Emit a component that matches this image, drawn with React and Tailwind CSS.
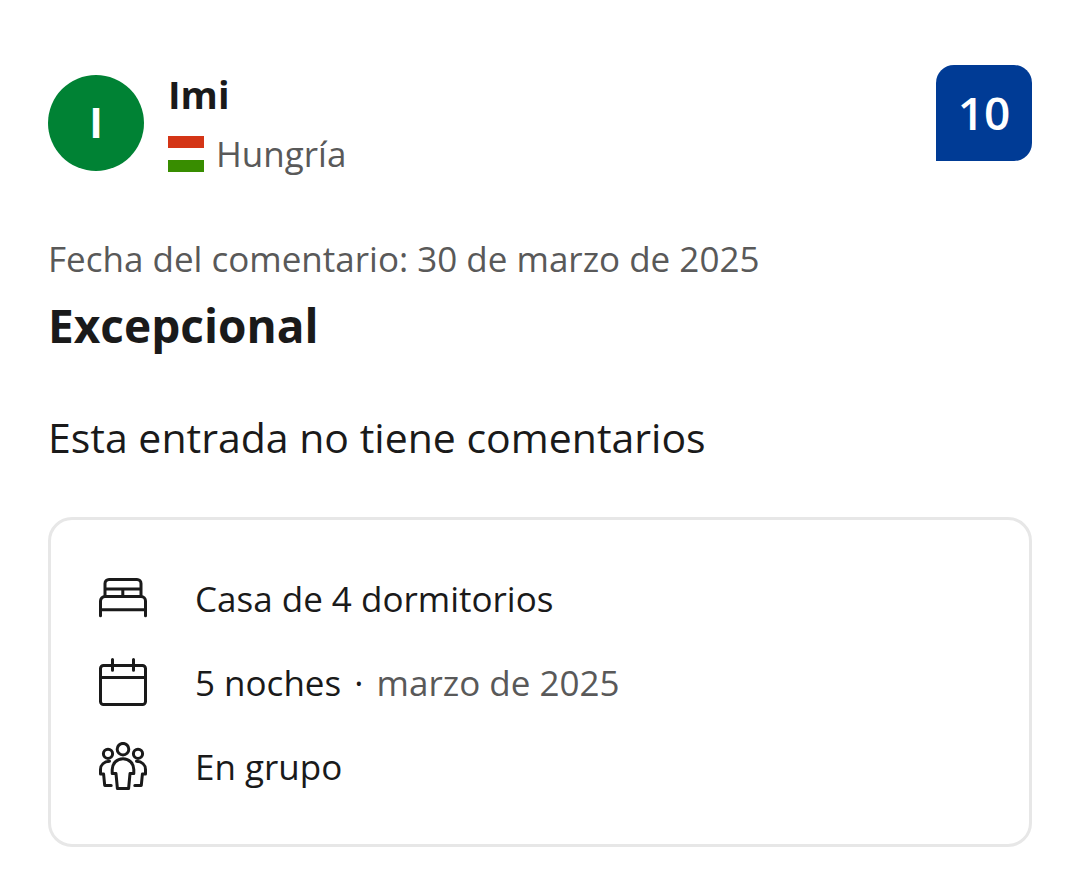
const stroke = {
  className: "size-12 shrink-0",
  viewBox: "0 0 48 48",
  fill: "none",
  stroke: "currentColor",
  strokeWidth: 3,
  strokeLinecap: "round",
  strokeLinejoin: "round",
  "aria-hidden": true,
};

function BedIcon() {
  return (
    <svg {...stroke}>
      <path d="M6 22.5V9.500a4 4 0 0 1 4-4H38a4 4 0 0 1 4 4v13M6 15H42M23.800 15v7.500" />
      <path d="M1.500 41.800V27a4.500 4.500 0 0 1 4.500-4.500h36a4.500 4.500 0 0 1 4.500 4.500v14.800M1.500 35.700h45" />
    </svg>
  );
}

function CalendarIcon() {
  return (
    <svg {...stroke}>
      <rect x="1.5" y="7.5" width="45" height="39" rx="3" />
      <path d="M1.5 19.4h45M13.5 1.5v10.8M34.5 1.5v10.8" />
    </svg>
  );
}

function GroupIcon() {
  return (
    <svg {...stroke}>
      <circle cx="24" cy="7.2" r="5.8" />
      <circle cx="9" cy="11.8" r="4.6" />
      <circle cx="39" cy="11.8" r="4.6" />
      <path d="M24 16.8c-6.2 0-10.8 4.6-10.8 10.800v4h3.800l1.400 14.900h11.200L31 31.600h3.800v-4c0-6.200-4.600-10.800-10.800-10.800z" />
      <path d="M10.500 19.300C5 19.600 1.500 22.800 1.500 27.500v4.600h3.100l1.100 11.300h6.500" />
      <path d="M37.500 19.300c5.500.3 9 3.500 9 8.200v4.600h-3.100l-1.100 11.300h-6.500" />
    </svg>
  );
}

function HungaryFlag() {
  return (
    <svg className="size-9 shrink-0" viewBox="0 0 36 36" role="img" aria-label="Bandera de Hungría">
      <path fill="#fff" d="M0 0h36v36H0z" />
      <path fill="#d43516" d="M0 0h36v12H0z" />
      <path fill="#388d00" d="M0 24h36v12H0z" />
    </svg>
  );
}

function Detail({ icon, children }) {
  return (
    <li className="flex items-center gap-12">
      {icon}
      <span className="pt-0.5 leading-10">{children}</span>
    </li>
  );
}

export default function App() {
  return (
    <article className="bg-white px-12 pt-[65px] pb-6 font-['Open_Sans',sans-serif] text-[35px] text-[#1a1a1a]">
      <header className="flex items-start justify-between">
        <div className="flex items-start gap-6">
          <div className="mt-2.5 flex size-24 items-center justify-center rounded-full bg-[#008234] pb-0.5 text-[41px] leading-10 font-bold text-white">
            I
          </div>
          <div>
            <h2 className="text-[38px] leading-[58px] font-bold">Imi</h2>
            <p className="flex items-center gap-3 leading-[62px] text-[#595959]">
              <HungaryFlag />
              Hungría
            </p>
          </div>
        </div>
        <div className="flex size-24 items-center justify-center rounded-t-[18px] rounded-br-[18px] bg-[#003b95] pb-0.5 text-[46px] leading-10 font-semibold text-white">
          10
        </div>
      </header>

      <p className="mt-11 leading-[60px] text-[#595959]">Fecha del comentario: 30 de marzo de 2025</p>
      <h3 className="text-[46px] leading-[72px] font-bold">Excepcional</h3>
      <p className="mt-12 text-[41px] leading-[56px]">Esta entrada no tiene comentarios</p>

      <ul className="mt-[52px] flex flex-col gap-9 rounded-3xl border-3 border-[#e7e7e7] px-12 py-[54px]">
        <Detail icon={<BedIcon />}>Casa de 4 dormitorios</Detail>
        <Detail icon={<CalendarIcon />}>
          5 noches <span className="mx-1">·</span> <span className="text-[#595959]">marzo de 2025</span>
        </Detail>
        <Detail icon={<GroupIcon />}>En grupo</Detail>
      </ul>
    </article>
  );
}
